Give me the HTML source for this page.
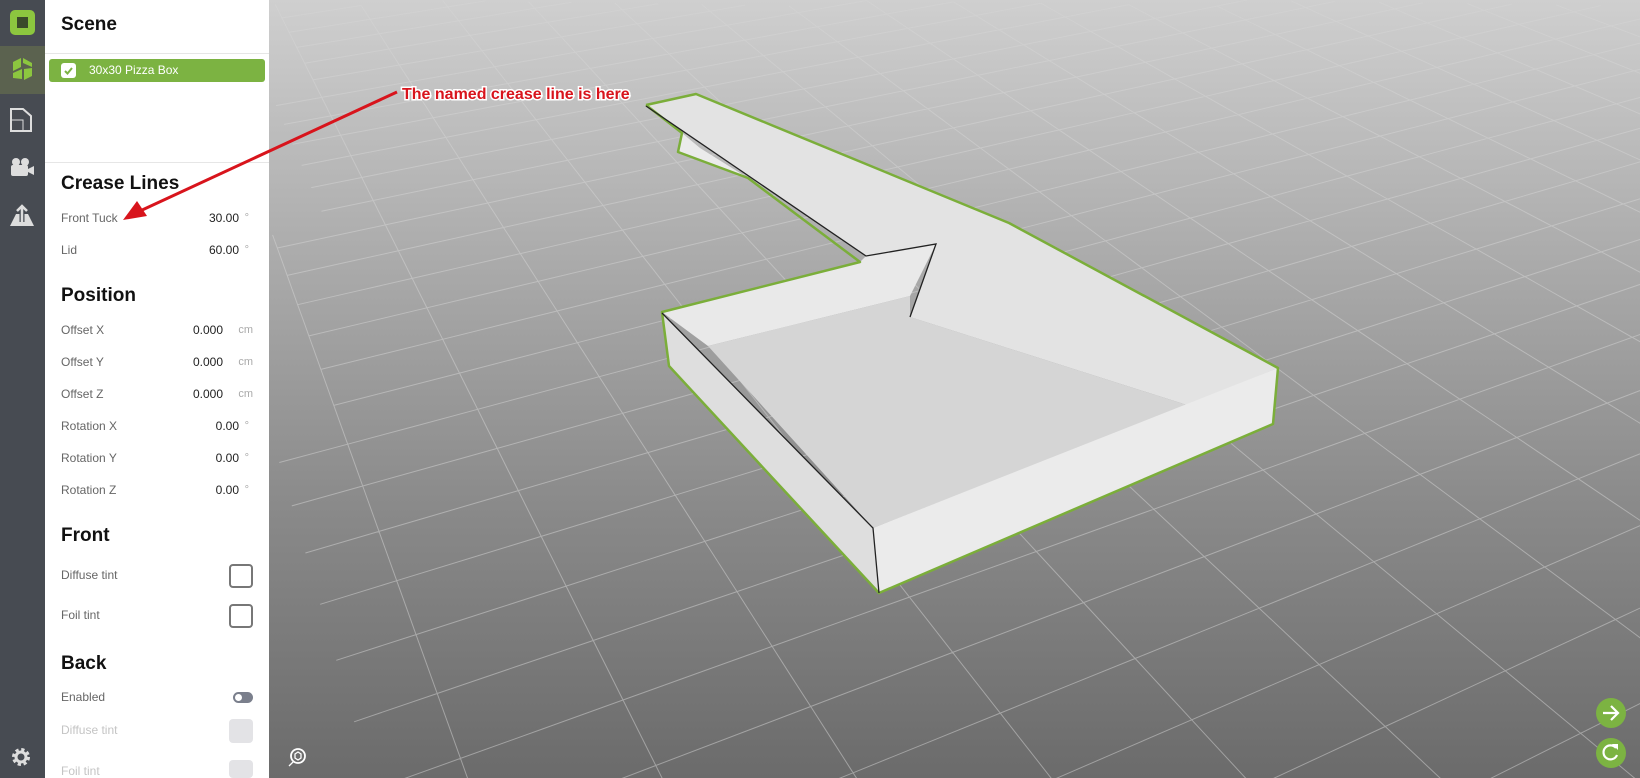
<!DOCTYPE html>
<html><head><meta charset="utf-8">
<style>
*{margin:0;padding:0;box-sizing:border-box}
html,body{width:1640px;height:778px;overflow:hidden}
body{position:relative;font-family:"Liberation Sans",sans-serif;background:#888}
#vp{position:absolute;left:269px;top:0;width:1371px;height:778px;background:linear-gradient(#cfcfcf 0%,#a9a9a9 35%,#8a8a8a 65%,#6b6b6b 100%)}
#side{position:absolute;left:0;top:0;width:45px;height:778px;background:#474b52}
#panel{position:absolute;left:45px;top:0;width:224px;height:778px;background:#fff;overflow:hidden}
.h{position:absolute;left:16px;font-weight:bold;font-size:19px;color:#111}
.r{position:absolute;left:16px;right:16px;font-size:12px;color:#666;height:16px;line-height:16px}
.r b{position:absolute;right:14px;font-weight:normal;color:#222}
.r i{position:absolute;right:0;font-style:normal;color:#aaa;font-size:11px}
.r i.d{right:4px}
.sw{position:absolute;right:16px;width:24px;height:24px;border:2px solid #777;border-radius:4px}
.dis{color:#c4c4c4}
.swd{border:none;background:#e3e3e6}
</style></head><body>
<div id="vp"></div>
<svg width="1640" height="778" style="position:absolute;left:0;top:0">
<g id="grid" stroke="#d6d6d6" stroke-opacity="0.5" stroke-width="1" fill="none"></g>
<polygon points="646,105 696,94 1009,223 1278,368 1187,405 910,317 936,244 866,256" fill="#e3e3e3"/>
<polygon points="682,133 678,152 748,178 700,148" fill="#ebebeb"/>
<polygon points="662,312 860,262 866,256 936,244 910,296 708,346" fill="#e9e9e9"/>
<polygon points="708,346 910,296 910,317 1187,405 873,528" fill="#d5d5d5"/>
<polygon points="662,312 873,528 879,593 669,366" fill="#dedede"/>
<polygon points="873,528 1278,368 1273,424 879,593" fill="#ebebeb"/>
<polyline points="646,105 696,94 1009,223 1278,368 1273,424 879,593 669,366 662,312 860,262 748,178 678,152 682,133 646,105" fill="none" stroke="#7bae3a" stroke-width="2.5" stroke-linejoin="round"/>
<polyline points="646,106 866,256 936,244 910,317" fill="none" stroke="#222" stroke-width="1.3"/>
<polyline points="662,313 873,528 879,593" fill="none" stroke="#222" stroke-width="1.3"/>
<circle cx="1611" cy="713" r="15" fill="#7cb342"/>
<path d="M1603 713h14M1611 706l7 7-7 7" stroke="#fff" stroke-width="2.2" fill="none"/>
<circle cx="1611" cy="753" r="15" fill="#7cb342"/>
<path d="M1616 748a7 7 0 1 0 1 7" stroke="#fff" stroke-width="2.2" fill="none"/><path d="M1612 744l6 0 0 6z" fill="#fff"/>
<circle cx="298" cy="756" r="7" stroke="#fff" stroke-width="1.8" fill="none"/>
<path d="M293 762l-4 4M295 754l3-2 3 2v4l-3 2-3-2z" stroke="#fff" stroke-width="1.3" fill="none"/>
</svg>
<div id="side">
<div style="position:absolute;left:0;top:0;width:45px;height:46px;"><div style="position:absolute;left:10px;top:10px;width:25px;height:25px;background:#8cc63f;border-radius:5px"><div style="position:absolute;left:7px;top:7px;width:11px;height:11px;background:#3a4a2a"></div></div></div>
<div style="position:absolute;left:0;top:46px;width:45px;height:48px;background:#5b624f"><svg width="45" height="48"><path d="M13 16l8-4v9l-8 4zM23 12l9 5v4l-9-4zM13 27l9-4v10l-9-1zM24 23l8-1v8l-8 4z" fill="#8cc63f"/></svg></div>
<svg style="position:absolute;left:0;top:100px" width="45" height="40"><path d="M11 9h12l8 7v15H11z" stroke="#ddd" stroke-width="2" fill="none"/><path d="M11 20h12v11" stroke="#ddd" stroke-width="1" fill="none"/></svg>
<svg style="position:absolute;left:0;top:148px" width="45" height="40"><circle cx="16" cy="14" r="4" fill="#ddd"/><circle cx="25" cy="14" r="4" fill="#ddd"/><rect x="11" y="17" width="17" height="11" rx="2" fill="#ddd"/><path d="M28 21l6-3v9l-6-3z" fill="#ddd"/></svg>
<svg style="position:absolute;left:0;top:196px" width="45" height="40"><path d="M10 30l6-12h12l6 12z" fill="#ddd"/><path d="M22 26V10M16 16l6-6 6 6" stroke="#474b52" stroke-width="5" fill="none"/><path d="M22 26V10M17 15l5-5 5 5" stroke="#ddd" stroke-width="2.5" fill="none"/></svg>
<svg style="position:absolute;left:0;top:742px" width="45" height="36"><circle cx="21" cy="15" r="7" stroke="#ddd" stroke-width="4" stroke-dasharray="3 2.5" fill="none"/><circle cx="21" cy="15" r="5" stroke="#ddd" stroke-width="3" fill="none"/></svg>
</div>
<div id="panel">
<div class="h" style="top:14px">Scene</div>
<div style="position:absolute;left:0;right:0;top:53px;border-top:1px solid #e6e6e6"></div>
<div style="position:absolute;left:4px;right:4px;top:59px;height:23px;background:#7cb342;border-radius:3px;color:#fff;font-size:12px;line-height:23px;padding-left:40px">30x30 Pizza Box
<div style="position:absolute;left:12px;top:4px;width:15px;height:15px;background:#fff;border-radius:3px"><svg width="15" height="15"><path d="M4 8l2.5 2.5L11 5" stroke="#7cb342" stroke-width="2" fill="none"/></svg></div></div>
<div style="position:absolute;left:0;right:0;top:162px;border-top:1px solid #e6e6e6"></div>
<div class="h" style="top:173px">Crease Lines</div>
<div class="r" style="top:210px">Front Tuck<b>30.00</b><i class="d">°</i></div>
<div class="r" style="top:242px">Lid<b>60.00</b><i class="d">°</i></div>
<div class="h" style="top:285px">Position</div>
<div class="r" style="top:322px">Offset X<b style="right:30px">0.000</b><i>cm</i></div>
<div class="r" style="top:354px">Offset Y<b style="right:30px">0.000</b><i>cm</i></div>
<div class="r" style="top:386px">Offset Z<b style="right:30px">0.000</b><i>cm</i></div>
<div class="r" style="top:418px">Rotation X<b>0.00</b><i class="d">°</i></div>
<div class="r" style="top:450px">Rotation Y<b>0.00</b><i class="d">°</i></div>
<div class="r" style="top:482px">Rotation Z<b>0.00</b><i class="d">°</i></div>
<div class="h" style="top:525px">Front</div>
<div class="r" style="top:567px">Diffuse tint</div><div class="sw" style="top:564px"></div>
<div class="r" style="top:607px">Foil tint</div><div class="sw" style="top:604px"></div>
<div class="h" style="top:653px">Back</div>
<div class="r" style="top:689px">Enabled</div>
<div style="position:absolute;right:16px;top:692px;width:20px;height:11px;border-radius:6px;background:#7a7f8c"><div style="position:absolute;left:2px;top:2px;width:7px;height:7px;border-radius:50%;background:#fff"></div></div>
<div class="r dis" style="top:722px">Diffuse tint</div><div class="sw swd" style="top:719px"></div>
<div class="r dis" style="top:763px">Foil tint</div><div class="sw swd" style="top:760px;height:18px"></div>
</div>
<svg width="1640" height="778" style="position:absolute;left:0;top:0;pointer-events:none">
<line x1="397" y1="92" x2="140" y2="211" stroke="#d8141c" stroke-width="3"/>
<polygon points="123,220 137,201 147,216" fill="#d8141c"/>
<text x="402" y="99" font-family="Liberation Sans" font-weight="bold" font-size="16" fill="#d8141c" stroke="#fff" stroke-width="3" paint-order="stroke">The named crease line is here</text>
</svg>
<script>
(function(){
var g=document.getElementById('grid'),a=0.043,b=0.048,VA=[4240,-600],VB=[-27,-600],O=[623,700];
function P(u,v){var w=1+u*a+v*b;if(w<0.04)return null;return[(O[0]+u*a*VA[0]+v*b*VB[0])/w,(O[1]+u*a*VA[1]+v*b*VB[1])/w];}
var d='';
function line(f){var s='',st=false;for(var t=-100;t<=600;t+=0.5){var p=f(t);if(!p||p[1]<0||p[0]<269){st=false;continue;}s+=(st?'L':'M')+p[0].toFixed(1)+' '+p[1].toFixed(1);st=true;}return s;}
for(var v=-20;v<=200;v++)d+=line(function(t){return P(t,v)});
for(var u=-80;u<=250;u++)d+=line(function(t){return P(u,t)});
var p=document.createElementNS('http://www.w3.org/2000/svg','path');p.setAttribute('d',d);g.appendChild(p);
})();
</script>
</body></html>
